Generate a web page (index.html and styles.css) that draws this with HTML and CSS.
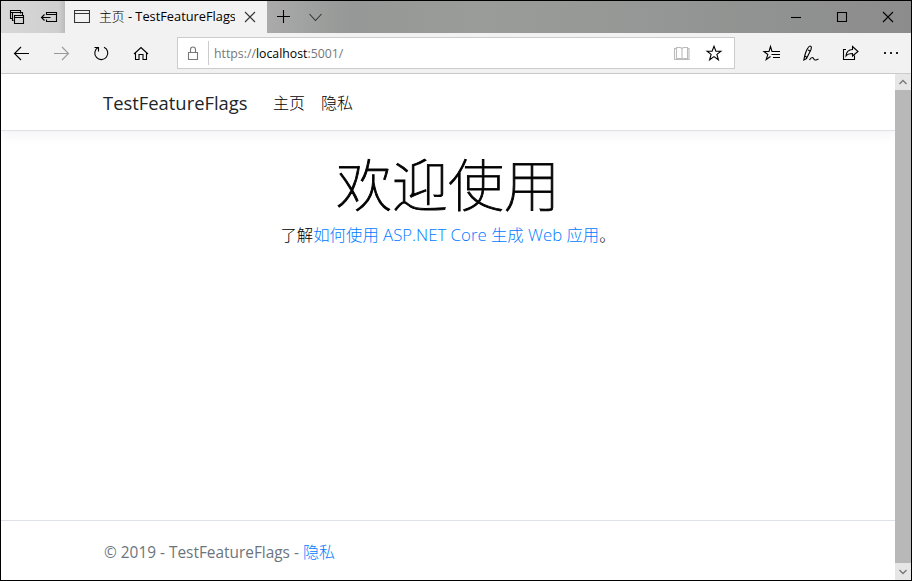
FILE: index.html
```html
<!DOCTYPE html>
<html lang="zh-CN">
<head>
<meta charset="utf-8">
<title>主页 - TestFeatureFlags</title>
<link rel="stylesheet" href="styles.css">
</head>
<body>
<div class="window">
  <div class="titlebar">
    <div class="tab-tools">
      <svg width="32" height="32" viewBox="0 0 32 32"><path d="M11.500 17.500h-2v-8h10v3M9 11.500h11M12.500 19.500h-1v-8h10v3M13.500 14.500h9v8h-9zM13 16.500h10"/></svg>
      <svg width="32" height="32" viewBox="0 0 32 32"><path d="M13.500 13.500v-2h10v9h-10v-2M13 13.500h11M8.500 16.500h9M11.500 13.500l-3 3 3 3"/></svg>
    </div>
    <div class="tab">
      <svg class="page-icon" width="16" height="14" viewBox="0 0 16 14"><path d="M.5.5h15v12H.5zM1 3.500h14"/></svg>
      <span class="tab-title"><span class="tab-cjk">主页</span> - TestFeatureFlags</span>
      <svg class="tab-close" width="12" height="12" viewBox="0 0 12 12"><path d="M1 1l10 10M11 1L1 11"/></svg>
    </div>
    <div class="tab-actions">
      <svg width="32" height="32" viewBox="0 0 32 32"><path d="M9 15.500h13M15.500 9v13"/></svg>
      <svg width="32" height="32" viewBox="0 0 32 32"><path d="M9.500 13l6 6.500 6-6.500" class="dim"/></svg>
    </div>
    <div class="controls">
      <svg width="46" height="32" viewBox="0 0 46 32"><path d="M18 16.500h10"/></svg>
      <svg width="46" height="32" viewBox="0 0 46 32"><path d="M18.500 11.500h9v9h-9z"/></svg>
      <svg width="46" height="32" viewBox="0 0 46 32"><path d="M18 11l10 10M28 11L18 21"/></svg>
    </div>
  </div>
  <div class="toolbar">
    <div class="buttons nav-buttons">
      <svg width="40" height="40" viewBox="0 0 40 40"><path d="M12.500 20.500H27M19 14l-6.500 6.500L19 27"/></svg>
      <svg width="40" height="40" viewBox="0 0 40 40"><path class="disabled" d="M12 20.500h14.500M20 14l6.500 6.500L20 27"/></svg>
      <svg width="40" height="40" viewBox="0 0 40 40"><path d="M22 14.200a6.500 6.500 0 1 1-6 .3M12.500 14.500h4v4"/></svg>
      <svg width="40" height="40" viewBox="0 0 40 40"><path d="M12 21l7-6.500 7 6.500M13.500 20v6.500h3.500v-5h4v5h3.500V20"/></svg>
    </div>
    <div class="address">
      <svg width="30" height="30" viewBox="0 0 30 30"><path class="lock" d="M10.500 14.500h9v7h-9zM12.500 14v-2.500a2.500 2.500 0 0 1 5 0V14"/></svg>
      <span class="url">https://<b>localhost</b>:5001/</span>
      <svg width="32" height="30" viewBox="0 0 32 30"><path class="book" d="M10.500 9.500h4l1.500 1 1.500-1h4v11h-4l-1.500 1-1.500-1h-4zM16 10.500v11M10 10.500H8.500v11h14.500v-11H22"/></svg>
      <svg width="32" height="30" viewBox="0 0 32 30"><path d="M16 8.200l1.900 5h5l-4 3.200 1.500 5.400L16 18.600l-4.400 3.200 1.500-5.400-4-3.200h5z"/></svg>
    </div>
    <div class="buttons">
      <svg width="40" height="40" viewBox="0 0 40 40"><path d="M22.500 18.500h-1.500L19.500 13.500l-1.500 5H13l3.800 3-1.600 5 4.300-3M22 18.500h7M20.500 21.500H29M22 24.500h7"/></svg>
      <svg width="40" height="40" viewBox="0 0 40 40"><path d="M12.800 27l1-4.500c1-4 3.500-9.500 5.200-9.500s1.600 1.500.8 4l-4.300 8.500zM14 23l2 1.500M17 17l2 1M15.500 25.500l-2.700 1.500M18.500 27c1-2 2-2.500 3-2.500s1 2.500 2.500 2.500 2-.5 3.500-1"/></svg>
      <svg width="40" height="40" viewBox="0 0 40 40"><path d="M15 16.500h-2.500v10h11v-4M21.500 13.500l5.500 5-5.500 4.500v-2.500c-3 0-5 .5-6.500 2.500 0-3.500 2.500-6.500 6.500-6.500z"/></svg>
      <svg width="40" height="40" viewBox="0 0 40 40"><path class="dots" d="M13 19h2v2h-2zM19 19h2v2h-2zM25 19h2v2h-2z"/></svg>
    </div>
  </div>
  <div class="viewport">
    <div class="page">
      <header class="site-header">
        <a class="brand">TestFeatureFlags</a>
        <nav class="site-nav"><a>主页</a><a>隐私</a></nav>
      </header>
      <main>
        <h1>欢迎使用</h1>
        <p>了解<a>如何使用 <span class="latin">ASP.NET Core</span> 生成 <span class="latin">Web</span> 应用</a>。</p>
      </main>
      <footer><span class="copyright">© 2019 - TestFeatureFlags - </span><a>隐私</a></footer>
    </div>
    <div class="scrollbar">
      <svg width="16" height="16" viewBox="0 0 16 16"><path d="M4.500 10L8 6.500l3.500 3.500"/></svg>
      <div class="thumb"></div>
      <svg width="16" height="17" viewBox="0 0 16 17"><path d="M4.500 7L8 10.500 11.500 7"/></svg>
    </div>
  </div>
</div>
</body>
</html>
```
FILE: styles.css
```css
* { box-sizing: border-box; }
body { margin: 0; font-family: "Open Sans", "Noto Sans CJK SC", sans-serif; color: #000; }
svg { display: block; flex: none; fill: none; stroke: #000; stroke-width: 1.1; }
.window { width: 912px; height: 581px; border: 1px solid #000; display: flex; flex-direction: column; overflow: hidden; background: #fff; }
.titlebar { height: 32px; flex: none; display: flex; background: linear-gradient(90deg, #aaa 266px, #959896 350px, #9a9c99 480px, #949795 650px, #8c8c8c 100%); }
.tab-tools { display: flex; width: 64px; background: linear-gradient(90deg, #d8d8d8, #cfcfcf 90%, #bbb); }
.tab { width: 202px; background: #f2f2f2; display: flex; align-items: center; padding-left: 9px; }
.page-icon { margin-right: 9px; stroke: #333; }
.tab-title { width: 136px; height: 20px; line-height: 19px; overflow: hidden; white-space: nowrap; font-size: 12.800px; }
.tab-cjk { font-weight: 300; }
.tab-close { margin-left: 9px; stroke: #333; }
.tab-actions { display: flex; padding-left: 1px; }
.dim { stroke: #333; }
.controls { display: flex; margin-left: auto; }
.toolbar { height: 41px; flex: none; display: flex; background: #f2f2f2; border-bottom: 1px solid #ccc; }
.buttons { display: flex; }
.nav-buttons { padding-left: 1px; }
.address { display: flex; width: 558px; height: 32px; margin: 4px 16px 0 15px; padding-right: 4px; border: 1px solid #ccc; background: #fff; align-items: center; }
.url { flex: 1; height: 24px; line-height: 25px; border-left: 1px solid #ccc; padding-left: 5px; color: #777; font-size: 12.300px; }
.url b { font-weight: 400; color: #000; }
.disabled { stroke: #999; }
.lock { stroke: #777; }
.book { stroke: #bbb; }
.dots { fill: #222; stroke: none; }
.viewport { flex: 1; display: flex; min-height: 0; }
.page { flex: 1; display: flex; flex-direction: column; font-size: 16px; }
.page a { color: #007bff; }
.site-header { height: 57px; flex: none; display: flex; align-items: center; padding-left: 102px; border-bottom: 1px solid #dee2e6; box-shadow: 0 4px 12px rgba(0,0,0,.05); }
.site-header .brand { width: 170px; font-size: 18.400px; line-height: 28px; padding-top: 1px; color: #212529; white-space: nowrap; }
.site-nav { display: flex; gap: 16px; font-weight: 300; }
.site-header .site-nav a { color: #000; }
main { flex: 1; text-align: center; padding-top: 20px; }
h1 { margin: 0; font-size: 56px; line-height: 66px; font-weight: 100; -webkit-text-stroke: .9px #000; }
p { margin: 6px 0 0; line-height: 24px; font-size: 16.400px; font-weight: 300; white-space: nowrap; }
.latin { font-size: 16.800px; }
footer { height: 60px; flex: none; border-top: 1px solid #dee2e6; padding-left: 103px; line-height: 63px; color: #6c757d; font-size: 16px; }
.copyright { white-space: pre; font-size: 15.400px; }
footer a { font-weight: 300; }
.scrollbar { width: 16px; display: flex; flex-direction: column; background: #e6e6e6; }
.scrollbar svg { stroke: #777; stroke-width: 1.3; }
.thumb { flex: 1; background: #b8b8b8; }
```
